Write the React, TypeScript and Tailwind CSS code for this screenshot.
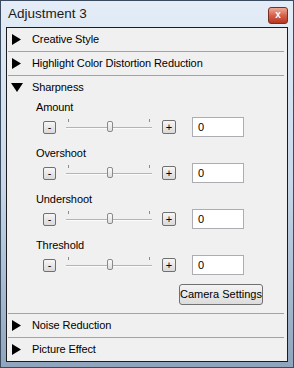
import { ReactElement } from 'react'

const font = { fontFamily: '"Liberation Sans", Arial, sans-serif' }

const RightArrow = (): ReactElement => (
  <svg width="11" height="11" viewBox="0 0 11 11" className="shrink-0">
    <polygon points="1,0 10,5.5 1,11" fill="#000" />
  </svg>
)

const DownArrow = (): ReactElement => (
  <svg width="12" height="9" viewBox="0 0 12 9" className="shrink-0">
    <polygon points="0,0 12,0 6,9" fill="#000" />
  </svg>
)

const Separator = (): ReactElement => <div className="mx-[1px] mr-[3px] h-px bg-[#a3a3a3]" />

const SectionRow = ({ title, open }: { title: string; open?: boolean }): ReactElement => (
  <div className="flex h-[23px] items-center pl-[4px]">
    <div className="flex w-[21px] items-center">{open ? <DownArrow /> : <RightArrow />}</div>
    <span className="text-[11px] tracking-[-0.1px] text-black">{title}</span>
  </div>
)

const SmallButton = ({ label, size }: { label: string; size: string }): ReactElement => (
  <div
    className={`${size} flex items-center justify-center rounded-[2px] border border-[#707070] bg-gradient-to-b from-[#f6f6f6] to-[#d9d9d9] text-[11px] leading-none text-black`}
  >
    {label}
  </div>
)

const SliderControl = ({ label }: { label: string }): ReactElement => (
  <div className="mb-[9px]">
    <div className="h-[14px] pl-[29px] text-[11px] leading-[14px] tracking-[-0.1px]">{label}</div>
    <div className="mt-[3px] flex h-[20px] items-center pl-[36px]">
      <SmallButton label="-" size="h-[13px] w-[13px]" />
      <div className="relative ml-[10px] h-[20px] w-[86px]">
        <div className="absolute left-0 right-0 top-[10px] h-px bg-[#b4b4b4]" />
        <div className="absolute left-0 right-0 top-[11px] h-px bg-[#fbfbfb]" />
        <div className="absolute left-[2px] top-[2px] h-[3px] w-px bg-[#8c8c8c]" />
        <div className="absolute right-[2px] top-[2px] h-[3px] w-px bg-[#8c8c8c]" />
        <div className="absolute left-[41px] top-[4px] h-[11px] w-[6px] rounded-[2px] border border-[#8a8a8a] bg-gradient-to-b from-[#fafafa] to-[#dedede]" />
      </div>
      <div className="ml-[10px]">
        <SmallButton label="+" size="h-[14px] w-[14px]" />
      </div>
      <div className="ml-[16px] flex h-[20px] w-[52px] items-center border border-[#abadb3] bg-white pl-[5px] text-[11px]">
        0
      </div>
    </div>
  </div>
)

const App = (): ReactElement => {
  return (
    <div
      style={font}
      className="flex h-[368px] w-[294px] flex-col border border-[#3b4b60] bg-gradient-to-b from-[#e4edf7] via-[#c8d8ea] to-[#8fa5bd]"
    >
      <div className="flex h-[26px] shrink-0 items-center justify-between pl-[7px] pr-[5px]">
        <span className="text-[13.5px] text-[#1a1a1a]">Adjustment 3</span>
        <div className="mt-[2px] flex h-[17px] w-[20px] items-center justify-center rounded-[3px] border border-[#7a2e22] bg-gradient-to-b from-[#eeaa98] via-[#d6604a] to-[#b5361e] text-[10px] font-bold leading-none text-white">
          x
        </div>
      </div>
      <div className="mx-[5px] mb-[5px] flex flex-1 flex-col overflow-hidden border border-[#1c1c1c] bg-[#f0f0f0] text-black">
        <SectionRow title="Creative Style" />
        <Separator />
        <SectionRow title="Highlight Color Distortion Reduction" />
        <Separator />
        <SectionRow title="Sharpness" open />
        <div className="pt-[1px]">
          <SliderControl label="Amount" />
          <SliderControl label="Overshoot" />
          <SliderControl label="Undershoot" />
          <SliderControl label="Threshold" />
          <div className="mb-[8px] mt-[3px] flex justify-end pr-[24px]">
            <div className="flex h-[21px] w-[84px] items-center justify-center rounded-[3px] border border-[#707070] bg-gradient-to-b from-[#f4f4f4] to-[#dcdcdc] text-[11px]">
              Camera Settings
            </div>
          </div>
        </div>
        <Separator />
        <SectionRow title="Noise Reduction" />
        <Separator />
        <SectionRow title="Picture Effect" />
      </div>
    </div>
  )
}

export default App
